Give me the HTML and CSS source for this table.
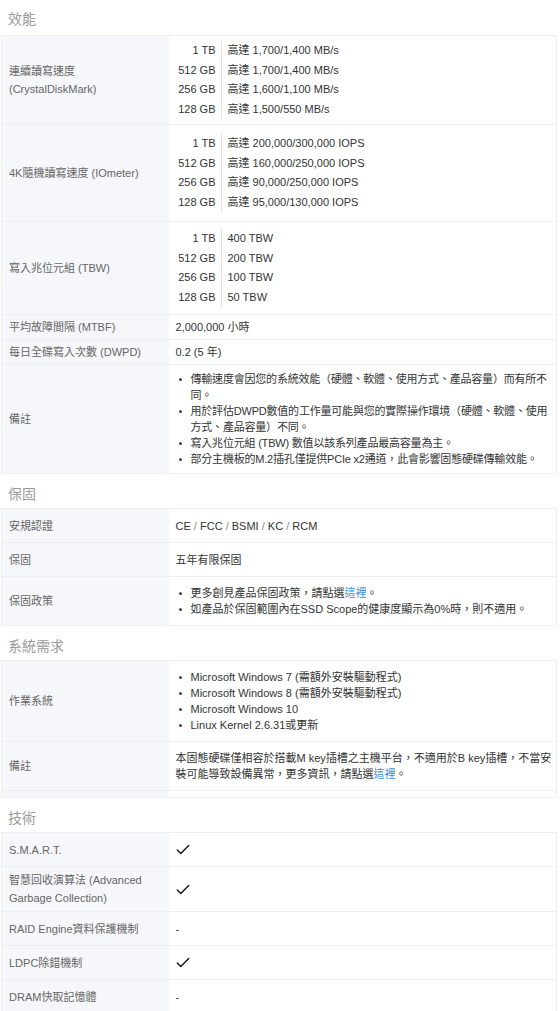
FILE: index.html
```html
<!DOCTYPE html>
<html lang="zh-Hant">
<head>
<meta charset="utf-8">
<title>規格</title>
<link rel="stylesheet" href="styles.css">
</head>
<body>
<section class="spec">
  <h3 class="spec-title">效能</h3>
  <table class="spec-table">
    <colgroup><col class="c-label"><col></colgroup>
    <tr class="r-cap r-cap1">
      <th>連續讀寫速度 (CrystalDiskMark)</th>
      <td>
        <table class="cap">
          <tr><td class="cap-size">1 TB</td><td class="cap-val">高達 1,700/1,400 MB/s</td></tr>
          <tr><td class="cap-size">512 GB</td><td class="cap-val">高達 1,700/1,400 MB/s</td></tr>
          <tr><td class="cap-size">256 GB</td><td class="cap-val">高達 1,600/1,100 MB/s</td></tr>
          <tr><td class="cap-size">128 GB</td><td class="cap-val">高達 1,500/550 MB/s</td></tr>
        </table>
      </td>
    </tr>
    <tr class="r-cap r-cap2">
      <th>4K隨機讀寫速度 (IOmeter)</th>
      <td>
        <table class="cap">
          <tr><td class="cap-size">1 TB</td><td class="cap-val">高達 200,000/300,000 IOPS</td></tr>
          <tr><td class="cap-size">512 GB</td><td class="cap-val">高達 160,000/250,000 IOPS</td></tr>
          <tr><td class="cap-size">256 GB</td><td class="cap-val">高達 90,000/250,000 IOPS</td></tr>
          <tr><td class="cap-size">128 GB</td><td class="cap-val">高達 95,000/130,000 IOPS</td></tr>
        </table>
      </td>
    </tr>
    <tr class="r-cap r-cap3">
      <th>寫入兆位元組 (TBW)</th>
      <td>
        <table class="cap">
          <tr><td class="cap-size">1 TB</td><td class="cap-val">400 TBW</td></tr>
          <tr><td class="cap-size">512 GB</td><td class="cap-val">200 TBW</td></tr>
          <tr><td class="cap-size">256 GB</td><td class="cap-val">100 TBW</td></tr>
          <tr><td class="cap-size">128 GB</td><td class="cap-val">50 TBW</td></tr>
        </table>
      </td>
    </tr>
    <tr class="r-slim">
      <th>平均故障間隔 (MTBF)</th>
      <td>2,000,000 小時</td>
    </tr>
    <tr class="r-slim">
      <th>每日全碟寫入次數 (DWPD)</th>
      <td>0.2 (5 年)</td>
    </tr>
    <tr class="r-list r-remark">
      <th>備註</th>
      <td>
        <ul class="bullets bullets-tight">
          <li>傳輸速度會因您的系統效能（硬體、軟體、使用方式、產品容量）而有所不同。</li>
          <li>用於評估DWPD數值的工作量可能與您的實際操作環境（硬體、軟體、使用方式、產品容量）不同。</li>
          <li>寫入兆位元組 (TBW) 數值以該系列產品最高容量為主。</li>
          <li>部分主機板的M.2插孔僅提供PCIe x2通道，此會影響固態硬碟傳輸效能。</li>
        </ul>
      </td>
    </tr>
  </table>
</section>

<section class="spec">
  <h3 class="spec-title">保固</h3>
  <table class="spec-table">
    <colgroup><col class="c-label"><col></colgroup>
    <tr class="r-std">
      <th>安規認證</th>
      <td>CE <span class="sep">/</span> FCC <span class="sep">/</span> BSMI <span class="sep">/</span> KC <span class="sep">/</span> RCM</td>
    </tr>
    <tr class="r-std">
      <th>保固</th>
      <td>五年有限保固</td>
    </tr>
    <tr class="r-list">
      <th>保固政策</th>
      <td>
        <ul class="bullets">
          <li>更多創見產品保固政策，請點選<a href="#" class="link">這裡</a>。</li>
          <li>如產品於保固範圍內在SSD Scope的健康度顯示為0%時，則不適用。</li>
        </ul>
      </td>
    </tr>
  </table>
</section>

<section class="spec">
  <h3 class="spec-title">系統需求</h3>
  <table class="spec-table">
    <colgroup><col class="c-label"><col></colgroup>
    <tr class="r-list">
      <th>作業系統</th>
      <td>
        <ul class="bullets">
          <li>Microsoft Windows 7 (需額外安裝驅動程式)</li>
          <li>Microsoft Windows 8 (需額外安裝驅動程式)</li>
          <li>Microsoft Windows 10</li>
          <li>Linux Kernel 2.6.31或更新</li>
        </ul>
      </td>
    </tr>
    <tr class="r-list">
      <th>備註</th>
      <td>本固態硬碟僅相容於搭載M key插槽之主機平台，不適用於B key插槽，不當安裝可能導致設備異常，更多資訊，請點選<a href="#" class="link">這裡</a>。</td>
    </tr>
    <tr class="r-empty">
      <th></th>
      <td></td>
    </tr>
  </table>
</section>

<section class="spec">
  <h3 class="spec-title">技術</h3>
  <table class="spec-table">
    <colgroup><col class="c-label"><col></colgroup>
    <tr class="r-std">
      <th>S.M.A.R.T.</th>
      <td><svg class="check" viewBox="0 0 16 12" aria-hidden="true"><path d="M1.5 6.5 L5.5 10.5 L14.5 1.5"/></svg></td>
    </tr>
    <tr class="r-std">
      <th>智慧回收演算法 (Advanced Garbage Collection)</th>
      <td><svg class="check" viewBox="0 0 16 12" aria-hidden="true"><path d="M1.5 6.5 L5.5 10.5 L14.5 1.5"/></svg></td>
    </tr>
    <tr class="r-std">
      <th>RAID Engine資料保護機制</th>
      <td>-</td>
    </tr>
    <tr class="r-std">
      <th>LDPC除錯機制</th>
      <td><svg class="check" viewBox="0 0 16 12" aria-hidden="true"><path d="M1.5 6.5 L5.5 10.5 L14.5 1.5"/></svg></td>
    </tr>
    <tr class="r-std">
      <th>DRAM快取記憶體</th>
      <td>-</td>
    </tr>
  </table>
</section>
</body>
</html>
```

FILE: styles.css
```css
html, body {
  margin: 0;
  padding: 0;
  background: #fff;
}

body {
  font-family: "Liberation Sans", Arial, "Noto Sans CJK TC", sans-serif;
  font-size: 11px;
  color: #333;
}

.spec {
  margin: 0;
}

.spec-title {
  margin: 0;
  padding: 9px 8px 6px;
  font-size: 14px;
  line-height: 20px;
  font-weight: normal;
  color: #9a9a9a;
}

.spec + .spec .spec-title {
  padding-top: 10px;
  padding-bottom: 4px;
}

.spec-table {
  width: 556px;
  margin-left: 1px;
  border-collapse: collapse;
  table-layout: fixed;
  border: 1px solid #eef0f2;
}

.c-label {
  width: 167px;
}

.spec-table > tbody > tr > th {
  background: #f5f7fa;
  color: #666;
  font-weight: normal;
  text-align: left;
  vertical-align: middle;
  padding: 3px 8px 3px 7px;
  line-height: 18px;
  border-top: 1px solid #eceef1;
}

.spec-table > tbody > tr > td {
  background: #fff;
  color: #333;
  vertical-align: middle;
  padding: 3px 3px 3px 7px;
  line-height: 16px;
  border-top: 1px solid #eceef1;
}

/* capacity rows */
.spec-table > tbody > tr.r-cap1 > td {
  padding-top: 5px;
  padding-bottom: 5px;
}

.spec-table > tbody > tr.r-cap2 > td {
  padding-top: 9px;
  padding-bottom: 9px;
}

.spec-table > tbody > tr.r-cap3 > td {
  padding-top: 7px;
  padding-bottom: 7px;
}

.cap {
  border-collapse: collapse;
}

.cap td {
  padding: 0;
  line-height: 19.5px;
  white-space: nowrap;
}

.cap .cap-size {
  width: 40px;
  text-align: right;
  padding-right: 5px;
}

.cap .cap-val {
  border-left: 1px solid #e2e2e2;
  padding-left: 6px;
}

/* standard single rows */
.spec-table > tbody > tr.r-std > th,
.spec-table > tbody > tr.r-std > td {
  height: 25px;
  padding-top: 4px;
  padding-bottom: 4px;
}

/* rows with lists / paragraphs */
.spec-table > tbody > tr.r-list > td {
  padding-top: 8px;
  padding-bottom: 8px;
}

.spec-table > tbody > tr.r-remark > td {
  padding-top: 6px;
  padding-bottom: 6px;
}

.spec-table > tbody > tr.r-empty > th,
.spec-table > tbody > tr.r-empty > td {
  height: 6px;
  padding: 0;
  line-height: 0;
}

.bullets {
  margin: 0;
  padding: 0 0 0 15px;
  list-style: none;
}

.bullets-tight {
  letter-spacing: -0.2px;
}

.bullets li {
  position: relative;
  line-height: 16px;
}

.bullets li::before {
  content: "";
  position: absolute;
  left: -12px;
  top: 7px;
  width: 3px;
  height: 3px;
  border-radius: 50%;
  background: #444;
}

.sep {
  color: #888;
}

.link {
  color: #3d8fd6;
  text-decoration: none;
}

.check {
  display: block;
  width: 14px;
  height: 11px;
  fill: none;
  stroke: #111;
  stroke-width: 1.6;
  stroke-linecap: round;
  stroke-linejoin: round;
}
```
